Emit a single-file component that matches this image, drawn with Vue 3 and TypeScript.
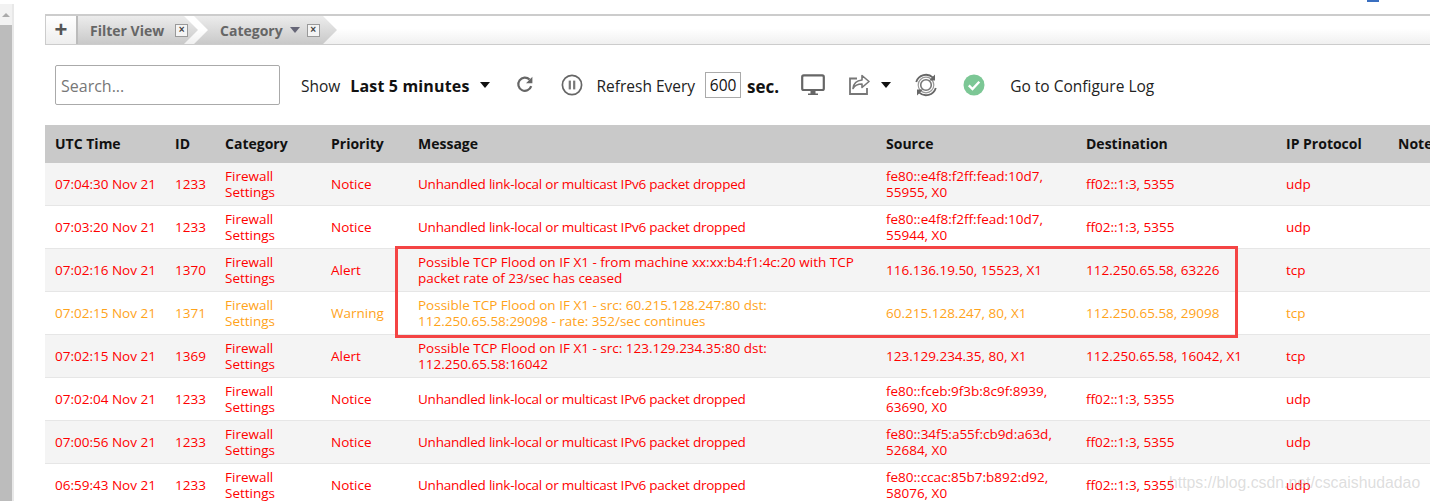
<script setup lang="ts">
interface Row {
  time: string; id: string; priority: string; msg: string[]; source: string[]; dest: string; proto: string; warn?: boolean; tight?: boolean
}
const unhandled = ['Unhandled link-local or multicast IPv6 packet dropped']
const rows: Row[] = [
  { time: '07:04:30 Nov 21', id: '1233', priority: 'Notice', msg: unhandled, tight: true, source: ['fe80::e4f8:f2ff:fead:10d7,', '55955, X0'], dest: 'ff02::1:3, 5355', proto: 'udp' },
  { time: '07:03:20 Nov 21', id: '1233', priority: 'Notice', msg: unhandled, tight: true, source: ['fe80::e4f8:f2ff:fead:10d7,', '55944, X0'], dest: 'ff02::1:3, 5355', proto: 'udp' },
  { time: '07:02:16 Nov 21', id: '1370', priority: 'Alert', msg: ['Possible TCP Flood on IF X1 - from machine xx:xx:b4:f1:4c:20 with TCP', 'packet rate of 23/sec has ceased'], source: ['116.136.19.50, 15523, X1'], dest: '112.250.65.58, 63226', proto: 'tcp' },
  { time: '07:02:15 Nov 21', id: '1371', priority: 'Warning', msg: ['Possible TCP Flood on IF X1 - src: 60.215.128.247:80 dst:', '112.250.65.58:29098 - rate: 352/sec continues'], source: ['60.215.128.247, 80, X1'], dest: '112.250.65.58, 29098', proto: 'tcp', warn: true },
  { time: '07:02:15 Nov 21', id: '1369', priority: 'Alert', msg: ['Possible TCP Flood on IF X1 - src: 123.129.234.35:80 dst:', '112.250.65.58:16042'], source: ['123.129.234.35, 80, X1'], dest: '112.250.65.58, 16042, X1', proto: 'tcp' },
  { time: '07:02:04 Nov 21', id: '1233', priority: 'Notice', msg: unhandled, tight: true, source: ['fe80::fceb:9f3b:8c9f:8939,', '63690, X0'], dest: 'ff02::1:3, 5355', proto: 'udp' },
  { time: '07:00:56 Nov 21', id: '1233', priority: 'Notice', msg: unhandled, tight: true, source: ['fe80::34f5:a55f:cb9d:a63d,', '52684, X0'], dest: 'ff02::1:3, 5355', proto: 'udp' },
  { time: '06:59:43 Nov 21', id: '1233', priority: 'Notice', msg: unhandled, tight: true, source: ['fe80::ccac:85b7:b892:d92,', '58076, X0'], dest: 'ff02::1:3, 5355', proto: 'udp' },
]
</script>

<template>
  <div class="page">
    <div class="scrollbar">
      <div class="sb-up"><span class="sb-arrow"></span></div>
      <div class="sb-thumb"></div>
    </div>
    <div class="top-mark"></div>
    <main class="content">
      <div class="tabs">
        <button class="plus">+</button>
        <div class="tab tab-first">
          <span class="tab-label">Filter View</span>
          <span class="close">×</span>
        </div>
        <div class="tab tab-second">
          <span class="tab-label">Category</span>
          <span class="tab-caret"></span>
          <span class="close">×</span>
        </div>
      </div>

      <div class="toolbar">
        <input class="search" placeholder="Search..." />
        <span class="show txt">Show</span>
        <strong class="range txt">Last 5 minutes</strong>
        <span class="caret"></span>
        <svg class="ic reload" viewBox="0 0 20 20" width="20" height="20"><path d="M16.2 11.2A6.6 6.6 0 1 1 14.6 4.6" fill="none" stroke="#666" stroke-width="2.2"/><path d="M17.4 1.8v6.4h-6.4z" fill="#666"/></svg>
        <svg class="ic pause" viewBox="0 0 22 22" width="22" height="22"><circle cx="11" cy="11" r="9.6" fill="none" stroke="#666" stroke-width="1.7"/><rect x="7.7" y="6.6" width="2.2" height="8.8" fill="#777"/><rect x="12.1" y="6.6" width="2.2" height="8.8" fill="#777"/></svg>
        <span class="refresh txt">Refresh Every</span>
        <span class="secs">600</span>
        <strong class="sec txt">sec.</strong>
        <svg class="ic monitor" viewBox="0 0 24 22" width="24" height="22"><rect x="1.2" y="1.4" width="21.6" height="14.6" rx="1.5" fill="none" stroke="#666" stroke-width="2.2"/><path d="M9.5 16.5h5v3h-5zM7 19.5h10V21H7z" fill="#666"/></svg>
        <svg class="ic share" viewBox="0 0 22 22" width="22" height="22"><path d="M9 4.5H2v15.5h17v-6" fill="none" stroke="#777" stroke-width="1.8"/><path d="M14 1.5l7 6-7 6V10c-4 0-7 1-9 4.5C5.5 9.500 9 6.500 14 6z" fill="#fff" stroke="#777" stroke-width="1.6" stroke-linejoin="round"/></svg>
        <span class="caret caret-share"></span>
        <svg class="ic sync" viewBox="0 0 24 24" width="24" height="24"><circle cx="12" cy="12" r="5.3" fill="none" stroke="#777" stroke-width="1.6"/><circle cx="12" cy="12" r="7.800" fill="none" stroke="#999" stroke-width="1.2"/><path d="M2.200 9A10.200 10.200 0 0 1 19 4.600" fill="none" stroke="#666" stroke-width="1.800"/><path d="M21.800 15A10.200 10.200 0 0 1 5 19.400" fill="none" stroke="#666" stroke-width="1.800"/><path d="M21 1.500v6h-6zM3 22.500v-6h6z" fill="#666"/></svg>
        <svg class="ic ok" viewBox="0 0 22 22" width="22" height="22"><circle cx="11" cy="11" r="10.500" fill="#7cc795"/><path d="M5.800 11.300l3.700 3.700 6.800-7.300" fill="none" stroke="#fff" stroke-width="2.400"/></svg>
        <span class="configure txt">Go to Configure Log</span>
      </div>

      <div class="table-wrap">
        <table>
          <colgroup>
            <col style="width:120px" /><col style="width:50px" /><col style="width:106px" /><col style="width:87px" />
            <col style="width:468px" /><col style="width:200px" /><col style="width:200px" /><col style="width:112px" /><col style="width:100px" />
          </colgroup>
          <thead>
            <tr><th>UTC Time</th><th>ID</th><th>Category</th><th>Priority</th><th>Message</th><th>Source</th><th>Destination</th><th>IP Protocol</th><th>Notes</th></tr>
          </thead>
          <tbody>
            <tr v-for="(r, i) in rows" :key="i" :class="{ warn: r.warn }">
              <td>{{ r.time }}</td>
              <td>{{ r.id }}</td>
              <td>Firewall<br />Settings</td>
              <td>{{ r.priority }}</td>
              <td :class="{ tight: r.tight }"><template v-for="(l, j) in r.msg" :key="j"><br v-if="j" />{{ l }}</template></td>
              <td><template v-for="(l, j) in r.source" :key="j"><br v-if="j" />{{ l }}</template></td>
              <td>{{ r.dest }}</td>
              <td>{{ r.proto }}</td>
              <td></td>
            </tr>
          </tbody>
        </table>
        <div class="highlight"></div>
        <div class="watermark">https://blog.csdn.net/cscaishudadao</div>
      </div>
    </main>
  </div>
</template>

<style>
html, body { margin: 0; background: #fff; overflow: hidden; }
</style>

<style scoped>
.page { position: relative; display: flex; width: 1430px; height: 501px; overflow: hidden; background: #fff; font-family: "Open Sans", "Noto Sans", sans-serif; color: #111; }
.scrollbar { width: 12px; flex: none; margin-top: 4px; border-right: 2px solid #e8e8e8; background: #f2f2f2; display: flex; flex-direction: column; }
.sb-up { height: 21px; display: flex; justify-content: center; padding-top: 9px; box-sizing: border-box; }
.sb-arrow { width: 0; height: 0; border: 4px solid transparent; border-top: 0; border-bottom: 4px solid #aaa; }
.sb-thumb { flex: 1; background: #bcbcbc; }
.top-mark { position: absolute; left: 1367px; top: 0; width: 12px; height: 2px; background: #3a6fc0; }
.content { margin-left: 31px; flex: 1; min-width: 0; padding-top: 14px; }

.tabs { height: 31px; box-sizing: border-box; border: 1px solid #ccc; border-width: 2px 0 1px 1px; background: linear-gradient(#fff 45%, #f0f0f0); display: flex; align-items: stretch; font-family: "Open Sans", sans-serif; }
.plus { width: 32px; flex: none; border: 0; border-right: 2px solid #bbb; padding: 0; background: linear-gradient(#fff, #eee); font: bold 22px "Liberation Sans", sans-serif; color: #555; }
.tab { height: 28px; display: flex; align-items: center; background: linear-gradient(#ececec, #c9c9c9); clip-path: polygon(0 0, calc(100% - 14px) 0, 100% 50%, calc(100% - 14px) 100%, 0 100%); font-weight: 700; font-size: 14px; color: #666; box-sizing: border-box; flex: none; }
.tab-first { width: 120px; padding-left: 12px; }
.tab-second { width: 143px; margin-left: -4px; padding-left: 26px; clip-path: polygon(0 0, calc(100% - 14px) 0, 100% 50%, calc(100% - 14px) 100%, 0 100%, 14px 50%); }
.tab-first .close { margin-left: 11px; }
.tab-caret { width: 0; height: 0; border: 5.500px solid transparent; border-top: 6px solid #667; border-bottom: 0; margin: 0 7px; flex: none; }
.close { width: 11px; height: 11px; border: 1px solid #999; background: #f4f4f4; font: bold 10px/10px "Liberation Sans", sans-serif; color: #444; text-align: center; box-sizing: content-box; flex: none; }

.toolbar { height: 80px; display: flex; align-items: center; padding-left: 10px; font-size: 15.500px; color: #222; }
.txt { padding-top: 2px; }
.search { width: 225px; height: 40px; box-sizing: border-box; border: 1px solid #aaa; border-radius: 2px; padding: 2px 5px 0; font: 16px "Open Sans", sans-serif; outline: none; }
.search::placeholder { color: #777; }
.show { margin-left: 21px; }
.range { margin-left: 10px; font-family: "Open Sans", sans-serif; font-size: 16px; letter-spacing: 0.15px; color: #111; }
.caret { width: 0; height: 0; border: 5.500px solid transparent; border-top: 6px solid #111; border-bottom: 0; margin-left: 11px; }
.ic { flex: none; }
.reload { margin-left: 25px; }
.pause { margin-left: 26px; }
.refresh { margin-left: 13px; }
.secs { margin-left: 10px; width: 36px; height: 26px; box-sizing: border-box; border: 1px solid #aaa; text-align: center; line-height: 24px; color: #111; }
.sec { margin-left: 6px; font-family: "Open Sans", sans-serif; font-size: 17px; color: #111; }
.monitor { margin-left: 22px; }
.share { margin-left: 23px; }
.caret-share { margin-left: 11px; }
.sync { margin-left: 23px; }
.ok { margin-left: 25px; }
.configure { margin-left: 25px; }

.table-wrap { position: relative; margin-top: 0; }
table { border-collapse: separate; border-spacing: 0; table-layout: fixed; width: 1443px; font-size: 13.500px; font-family: "Open Sans", sans-serif; }
th { height: 38px; box-sizing: border-box; padding: 0 0 2px 10px; background: #c9c9c9; text-align: left; font-weight: 700; color: #111; font-size: 14px; font-family: "Open Sans", sans-serif; white-space: nowrap; overflow: hidden; }
td { height: 43px; padding: 0 0 0 10px; box-sizing: border-box; border-bottom: 1px solid #e6e6e6; color: #f00; line-height: 16px; white-space: nowrap; overflow: hidden; }
td.tight { letter-spacing: -0.23px; }
tbody tr:nth-child(odd) { background: #f4f4f4; }
tr.warn td { color: #ffa31a; }
.highlight { position: absolute; left: 350px; top: 121px; width: 843px; height: 92px; box-sizing: border-box; border: 3px solid #f44444; }
.watermark { position: absolute; left: 1124px; top: 349px; font: 15.800px "Liberation Sans", sans-serif; color: rgba(170,170,170,.4); white-space: nowrap; }
</style>
